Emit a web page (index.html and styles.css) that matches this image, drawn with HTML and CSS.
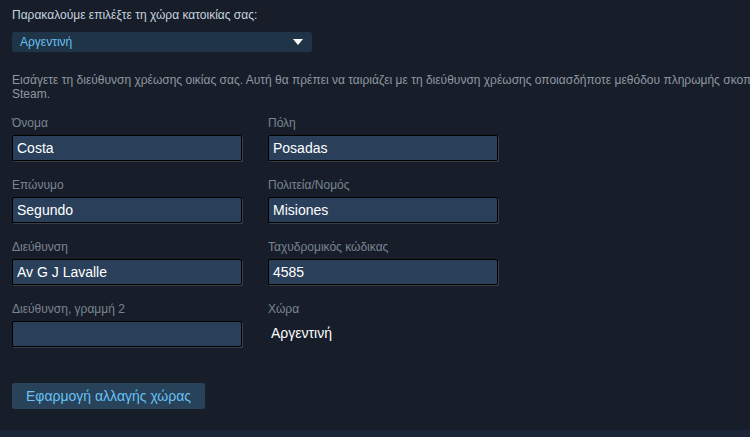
FILE: index.html
```html
<!DOCTYPE html>
<html>
<head>
<meta charset="utf-8" />
<title>Διεύθυνση χρέωσης</title>
<link rel="stylesheet" href="styles.css">
</head>
<body>
<!-- ********************* Billing address begin *********************** -->
<div class="page">
 <div class="countryPrompt">Παρακαλούμε επιλέξτε τη χώρα κατοικίας σας:</div>
 <div class="countrySelect">
  <span>Αργεντινή</span>
  <span class="arrow"></span>
 </div>

 <p class="hint">
  <span>Εισάγετε τη διεύθυνση χρέωσης οικίας σας. Αυτή θα πρέπει να ταιριάζει με τη διεύθυνση χρέωσης οποιασδήποτε μεθόδου πληρωμής σκοπεύετε να χρησιμοποιήσετε στο</span>
  <span>Steam.</span>
 </p>

 <div class="formGrid">
  <div class="field">
   <label>Όνομα</label>
   <div class="inputBox">Costa</div>
  </div>
  <div class="field">
   <label>Πόλη</label>
   <div class="inputBox">Posadas</div>
  </div>
  <div class="field">
   <label>Επώνυμο</label>
   <div class="inputBox">Segundo</div>
  </div>
  <div class="field">
   <label>Πολιτεία/Νομός</label>
   <div class="inputBox">Misiones</div>
  </div>
  <div class="field">
   <label>Διεύθυνση</label>
   <div class="inputBox">Av G J Lavalle</div>
  </div>
  <div class="field">
   <label>Ταχυδρομικός κώδικας</label>
   <div class="inputBox">4585</div>
  </div>
  <div class="field">
   <label>Διεύθυνση, γραμμή 2</label>
   <div class="inputBox"></div>
  </div>
  <div class="field">
   <label>Χώρα</label>
   <div class="staticValue">Αργεντινή</div>
  </div>
 </div>

 <div class="buttonRow">
  <div class="applyButton">Εφαρμογή αλλαγής χώρας</div>
 </div>
</div>
<div class="footerStrip"></div>
<!-- ********************* Billing address end *********************** -->
</body>
</html>
```

FILE: styles.css
```css
html, body {
margin:0; padding:0; height:100%;
background-color:#171e2a; overflow:hidden;
font-family: "Liberation Sans", Arial, sans-serif; font-size:12px;
}
.page {
padding:8px 12px 0 12px; height:430px; box-sizing:border-box;
}
.countryPrompt {
color:#c6d4df; line-height:14px;
}
.countrySelect {
display:flex; justify-content:space-between; align-items:center;
width:300px; height:20px; box-sizing:border-box; margin-top:10px;
padding:0 9px 0 8px; border-radius:3px;
background-color:#1f3446; color:#67c1f5;
}
.countrySelect .arrow {
width:0; height:0;
border-left:5px solid transparent; border-right:5px solid transparent;
border-top:6px solid #fff;
}
.hint {
margin:21px 0 0 0; color:#8f98a0; line-height:14px; white-space:nowrap;
}
.hint span { display:block; }
.formGrid {
display:grid; grid-template-columns:256px 256px;
row-gap:17px; margin-top:15px;
}
.field label {
display:block; color:#7a8591; line-height:14px; height:14px; margin-bottom:5px;
}
.inputBox {
width:230px; height:26px; box-sizing:border-box;
border:1px solid #000; border-radius:2px;
box-shadow:1px 1px 0 rgba(255,255,255,0.15);
background-color:#2a3f5a; color:#fff;
font-size:14px; line-height:24px; padding:0 4px;
}
.staticValue {
color:#fff; font-size:14px; line-height:24px; padding-left:3px;
}
.buttonRow {
margin-top:36px;
}
.applyButton {
display:inline-block; height:26px; line-height:26px; padding:0 14px;
border-radius:2px; background-color:#274259; color:#67c1f5; font-size:14px;
}
.footerStrip {
height:7px; background-color:#1b2535;
}
```
